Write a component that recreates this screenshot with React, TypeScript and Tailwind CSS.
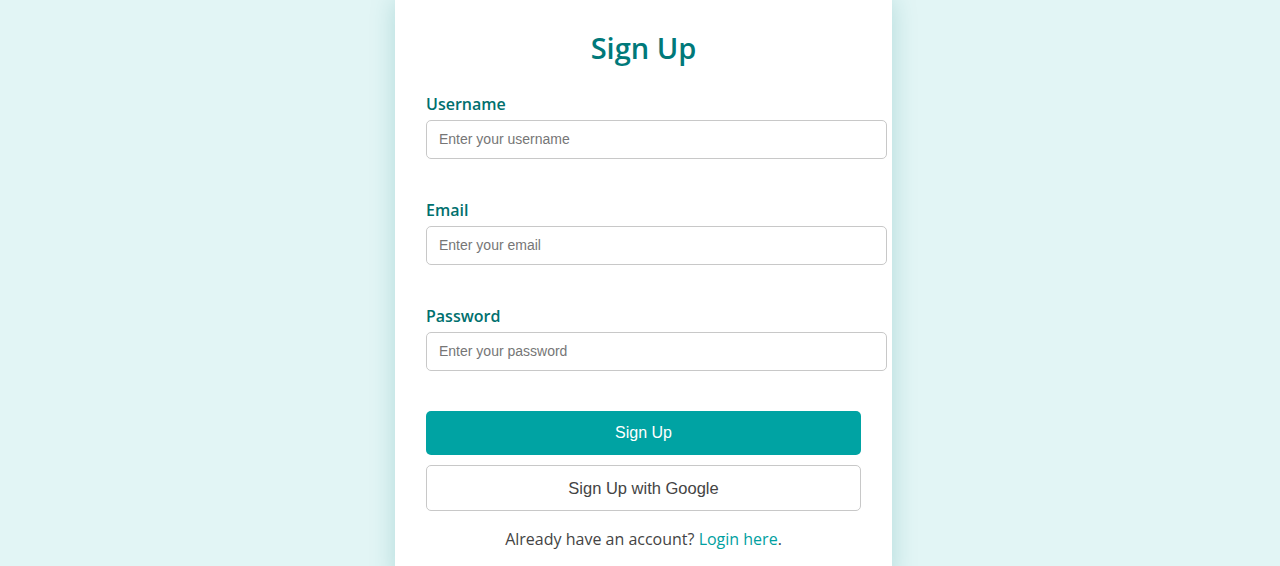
const fieldClass =
  "box-content w-full px-3 py-[10px] border border-[#c8c8c8] rounded-[5px] text-sm leading-[17px] font-['Liberation_Sans',Arial,sans-serif] text-[#333] placeholder:text-[#767676] outline-none";

const Field = ({ label, type, placeholder }: { label: string; type: string; placeholder: string }) => (
  <div className="mb-[40px]">
    <label className="block mb-[5px] text-base font-semibold text-[#00706e] leading-[22px]">{label}</label>
    <input type={type} placeholder={placeholder} className={fieldClass} />
  </div>
);

const App = () => {
  return (
    <div className="h-[566px] overflow-hidden bg-[#e2f5f5] flex justify-center pl-[7px] font-['Open_Sans',sans-serif]">
      <div className="w-[497px] bg-white px-[31px] pt-[28px] pb-[30px] shadow-[0_0_24px_rgba(0,128,128,0.22)] self-start">
        <h2 className="text-center text-[29px] leading-[40px] font-semibold text-[#00797a] mb-[25px]">Sign Up</h2>
        <form>
          <Field label="Username" type="text" placeholder="Enter your username" />
          <Field label="Email" type="email" placeholder="Enter your email" />
          <Field label="Password" type="password" placeholder="Enter your password" />
          <button
            type="button"
            className="w-full h-[44px] rounded-[5px] bg-[#00a3a3] text-white text-base font-['Liberation_Sans',Arial,sans-serif]"
          >
            Sign Up
          </button>
          <button
            type="button"
            className="w-full h-[46px] mt-[10px] rounded-[5px] bg-white border border-[#c8c8c8] text-[#444] text-[16.5px] font-['Liberation_Sans',Arial,sans-serif]"
          >
            Sign Up with Google
          </button>
        </form>
        <p className="text-center mt-[16px] text-base text-[#444]">
          Already have an account? <a href="#" className="text-[#00a0a0]">Login here</a>.
        </p>
      </div>
    </div>
  );
};

export default App;
